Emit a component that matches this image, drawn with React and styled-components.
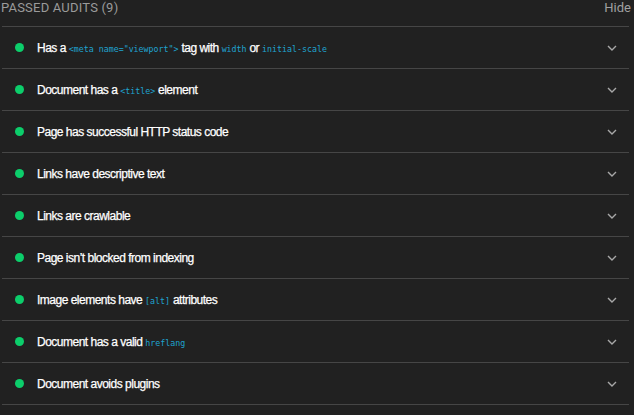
import React from "react";
import styled, { createGlobalStyle } from "styled-components";

const Global = createGlobalStyle`
  html, body { margin: 0; padding: 0; background: #212121; }
  body { font-family: "Liberation Sans", Arial, sans-serif; }
`;

const Page = styled.div`
  width: 634px;
  height: 415px;
  background: #212121;
  box-sizing: border-box;
  padding: 0 5px 0 2px;
  overflow: hidden;
`;

const HeaderBox = styled.div`
  display: flex;
  flex-direction: column;
`;

const HeaderRow = styled.div`
  display: flex;
  justify-content: space-between;
  align-items: flex-start;
  height: 26px;
  margin: 0 -2px 0 -2px;
  padding: 0 0 0 1px;
`;

const HeaderTitle = styled.span`
  font-family: Roboto, "Liberation Sans", sans-serif;
  font-size: 13px;
  color: #9b9b9b;
  text-transform: uppercase;
  letter-spacing: 0.2px;
`;

const HideLink = styled.span`
  font-family: Roboto, "Liberation Sans", sans-serif;
  font-size: 13px;
  color: #a0a0a0;
`;

const HeaderLine = styled.div`
  height: 1px;
  background: #464646;
`;

const Row = styled.div`
  display: flex;
  align-items: center;
  height: 41px;
  border-bottom: 1px solid #464646;
  padding: 0 12px 0 13px;
`;

const Dot = styled.span`
  width: 9px;
  height: 9px;
  border-radius: 50%;
  background: #0cce6b;
  flex: none;
`;

const Title = styled.span`
  margin-left: 13px;
  font-size: 12px;
  font-weight: 400;
  letter-spacing: -0.5px;
  -webkit-text-stroke: 0.25px #ffffff;
  color: #ffffff;
  flex: 1;
`;

const Code = styled.code`
  font-family: "DejaVu Sans Mono", "Liberation Mono", monospace;
  font-size: 8.3px;
  font-weight: 400;
  letter-spacing: 0;
  -webkit-text-stroke: 0;
  color: #1fa3d0;
`;

const Chevron = () => (
  <svg width="10" height="6" viewBox="0 0 10 6" style={{ flex: "none" }}>
    <path d="M1 1 L5 5 L9 1" fill="none" stroke="#a8a8a8" strokeWidth="1.4" />
  </svg>
);

const audits = [
  <>Has a <Code>{'<meta name="viewport">'}</Code> tag with <Code>width</Code> or <Code>initial-scale</Code></>,
  <>Document has a <Code>{"<title>"}</Code> element</>,
  <>Page has successful HTTP status code</>,
  <>Links have descriptive text</>,
  <>Links are crawlable</>,
  <>Page isn’t blocked from indexing</>,
  <>Image elements have <Code>[alt]</Code> attributes</>,
  <>Document has a valid <Code>hreflang</Code></>,
  <>Document avoids plugins</>,
];

function Header() {
  return (
    <HeaderBox>
      <HeaderRow>
        <HeaderTitle>Passed audits (9)</HeaderTitle>
        <HideLink>Hide</HideLink>
      </HeaderRow>
      <HeaderLine />
    </HeaderBox>
  );
}

export default function App() {
  return (
    <>
      <Global />
      <Page>
        <Header />
        {audits.map((a, i) => (
          <Row key={i}>
            <Dot />
            <Title>{a}</Title>
            <Chevron />
          </Row>
        ))}
      </Page>
    </>
  );
}
